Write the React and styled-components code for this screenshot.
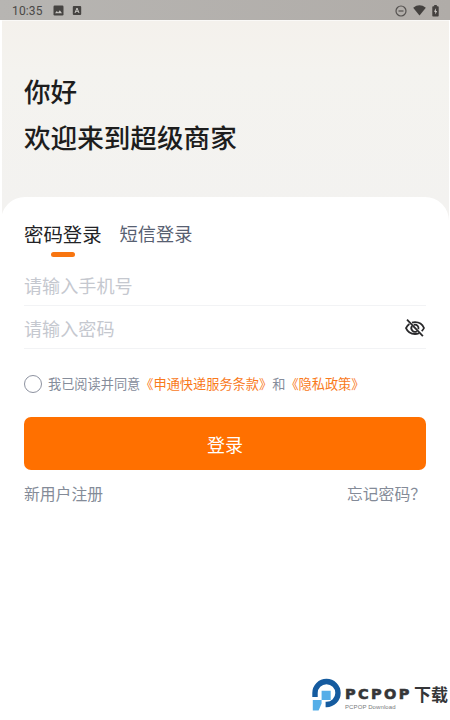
import React from "react";
import styled, { createGlobalStyle } from "styled-components";

const GlobalStyle = createGlobalStyle`
  *, *::before, *::after { box-sizing: border-box; }
  body { margin: 0; background: #fff; }
  button, input { font: inherit; border: 0; padding: 0; margin: 0; background: none; }
`;

const Screen = styled.main`
  width: 450px;
  height: 720px;
  overflow: hidden;
  display: flex;
  flex-direction: column;
  background: #fff;
  font-family: "Noto Sans CJK SC", "Noto Sans", sans-serif;
`;

const StatusBar = styled.header`
  height: 20px;
  flex: none;
  display: flex;
  align-items: center;
  justify-content: space-between;
  padding: 1px 11px 0 12px;
  background: linear-gradient(90deg, #b7b5b2, #b0aca8);
  color: #4a4846;
`;

const StatusGroup = styled.div`
  display: flex;
  align-items: center;
  gap: ${({ $gap }) => $gap}px;
`;

const Clock = styled.time`
  font: 400 12px/18px Roboto, sans-serif;
  letter-spacing: 0.15px;
  width: 32px;
  margin-right: 1px;
`;

const Hero = styled.section`
  height: 187px;
  flex: none;
  margin: 0 1px 0 2px;
  padding: 47px 22px 0;
  border-top: 1px solid #faf9f7;
  background: linear-gradient(180deg, #f4f1ec 0, #f4f3ef 50px, #f3f2f0 100%);
`;

const Greeting = styled.h1`
  margin: 0;
  font-size: 26.6px;
  line-height: 45.5px;
  font-weight: 500;
  color: #1d1d1d;
`;

const GreetingLine = styled.span`
  display: block;
`;

const HeroFoot = styled.div`
  height: 36px;
  flex: none;
  margin: -10px 1px -36px 2px;
  background: #f3f2f0;
`;

const Panel = styled.section`
  flex: 1;
  display: flex;
  flex-direction: column;
  position: relative;
  margin: 0 1px 0 1px;
  padding: 19px 23px 0;
  border-radius: 24px 24px 0 0;
  background: #fff;
`;

const Tabs = styled.nav`
  display: flex;
  align-items: flex-start;
  gap: 18px;
  height: 48px;
`;

const Tab = styled.button`
  display: flex;
  flex-direction: column;
  align-items: center;
  font-size: ${({ $active }) => ($active ? 19.4 : 18.2)}px;
  line-height: ${({ $active }) => ($active ? 36 : 34)}px;
  color: ${({ $active }) => ($active ? "#222326" : "#576071")};
`;

const TabMark = styled.span`
  width: 24px;
  height: 5px;
  border-radius: 3px;
  background: #f87510;
`;

const Field = styled.label`
  display: flex;
  align-items: center;
  justify-content: space-between;
  height: ${({ $height }) => $height}px;
  padding-top: ${({ $drop }) => $drop || 0}px;
  border-bottom: 1px solid #f2f3f5;
`;

const Input = styled.input`
  flex: 1;
  min-width: 0;
  height: 36px;
  font-size: 18.1px;
  outline: none;
  &::placeholder { color: #c5c8cf; opacity: 1; }
`;

const Agreement = styled.div`
  display: flex;
  align-items: center;
  height: 20px;
  margin-top: 25px;
  font-size: 13.2px;
  line-height: 20px;
  color: #868d9b;
  white-space: nowrap;
`;

const Radio = styled.span`
  width: 18px;
  height: 18px;
  margin-right: 6px;
  flex: none;
  border: 1px solid #8d92a0;
  border-radius: 50%;
`;

const Policy = styled.span`
  color: #f97a1c;
`;

const Submit = styled.button`
  height: 53px;
  margin-top: 23px;
  flex: none;
  border-radius: 7px;
  background: #ff7000;
  color: #fff;
  font-size: 18px;
`;

const Links = styled.div`
  display: flex;
  justify-content: space-between;
  margin-top: 12px;
  font-size: 15.8px;
  line-height: 24px;
  color: #848b98;
`;

const Brand = styled.footer`
  display: flex;
  align-items: center;
  height: 36px;
  margin: auto -22px 7px auto;
`;

const BrandText = styled.div`
  display: flex;
  flex-direction: column;
  margin: 4px 0 0 4px;
`;

const BrandName = styled.div`
  display: flex;
  align-items: center;
  height: 19px;
  color: #353638;
`;

const Wordmark = styled.span`
  width: 69px;
  padding-top: 3px;
  font: 700 14.5px/19px "DejaVu Sans", sans-serif;
  letter-spacing: 2.4px;
  -webkit-text-stroke: 0.6px #353638;
`;

const BrandSuffix = styled.span`
  font-size: 17px;
  line-height: 19px;
  font-weight: 700;
`;

const BrandCaption = styled.span`
  font: 6px/8px "Liberation Sans", sans-serif;
  letter-spacing: 0.1px;
  color: #77797c;
`;

const PictureIcon = () => (
  <svg width="11" height="11" viewBox="0 0 11 11">
    <rect x=".5" y=".5" width="10" height="10" rx="1.2" fill="#464442" />
    <path d="M2 8.3 3.8 6l1.3 1.4L6.8 5.2 9 8.3z" fill="#c9c7c4" />
  </svg>
);

const InputModeIcon = () => (
  <svg width="10" height="11" viewBox="0 0 10 11">
    <rect x=".8" y="1" width="8.4" height="9" rx="1" fill="#464442" />
    <path d="m3 8 2-5 2 5M3.7 6.3h2.6" fill="none" stroke="#c9c7c4" />
  </svg>
);

const DndIcon = () => (
  <svg width="12" height="12" viewBox="0 0 12 12" fill="none" stroke="#555250" strokeWidth="1.2">
    <circle cx="6" cy="6" r="5" />
    <path d="M3.5 6h5" />
  </svg>
);

const WifiIcon = () => (
  <svg width="13" height="11" viewBox="0 0 13 11">
    <path d="M.2 2.7Q6.5-2 12.8 2.7L6.5 10.6z" fill="#44413f" />
  </svg>
);

const BatteryIcon = () => (
  <svg width="7" height="12" viewBox="0 0 7 12">
    <path d="M2.2 0h2.6v1.2h1.1q.8 0 .8.8v8.7q0 .8-.8.8H1.1q-.8 0-.8-.8V2q0-.8.8-.8h1.1z" fill="#44413f" />
    <path d="M4.1 3 2 6.8h1.3v2.8L5.1 6H3.8z" fill="#d3d0cd" />
  </svg>
);

const EyeOffIcon = () => (
  <svg width="21" height="20" viewBox="0 0 21 20" fill="none" stroke="#29292b" strokeWidth="1.8">
    <path d="M7 4.7Q8.4 4.2 10 4.2c4.2 0 7.6 2.6 9 5.8q-.8 1.8-2.3 3.2M14 15.2q-1.8.8-4 .8c-4.2 0-7.6-2.6-9-5.9Q2 7.6 4.4 6" />
    <path d="M8.8 6.8a3.6 3.6 0 0 1 4.6 4.4M11.9 13.2A3.6 3.6 0 0 1 7 8.1" />
    <path d="m2 1.7 15.9 16.4" />
  </svg>
);

const BrandIcon = () => (
  <svg width="29" height="34" viewBox="0 0 29 34">
    <path d="M.3 19V15A14.2 14.2 0 1 1 14.5 29.2H13.6v-5.4h.9a8.8 8.8 0 1 0-8.8-8.8V19z" fill="#155b9f" />
    <path d="M9.6 12.8h9.1v9.2H9.6zM.8 22H9.6v3.4L6.6 32.5H.8z" fill="#55aee8" />
  </svg>
);

export default function App() {
  return (
    <Screen>
      <GlobalStyle />
      <StatusBar>
        <StatusGroup $gap={8}>
          <Clock>10:35</Clock>
          <PictureIcon />
          <InputModeIcon />
        </StatusGroup>
        <StatusGroup $gap={6}>
          <DndIcon />
          <WifiIcon />
          <BatteryIcon />
        </StatusGroup>
      </StatusBar>
      <Hero>
        <Greeting>
          <GreetingLine>你好</GreetingLine>
          <GreetingLine>欢迎来到超级商家</GreetingLine>
        </Greeting>
      </Hero>
      <HeroFoot />
      <Panel>
        <Tabs>
          <Tab $active>
            密码登录
            <TabMark />
          </Tab>
          <Tab>短信登录</Tab>
        </Tabs>
        <Field $height={42}>
          <Input type="tel" placeholder="请输入手机号" />
        </Field>
        <Field $height={43} $drop={2}>
          <Input type="password" placeholder="请输入密码" />
          <EyeOffIcon />
        </Field>
        <Agreement>
          <Radio />
          <span>我已阅读并同意</span>
          <Policy>《申通快递服务条款》</Policy>
          <span>和</span>
          <Policy>《隐私政策》</Policy>
        </Agreement>
        <Submit>登录</Submit>
        <Links>
          <span>新用户注册</span>
          <span>忘记密码？</span>
        </Links>
        <Brand>
          <BrandIcon />
          <BrandText>
            <BrandName>
              <Wordmark>PCPOP</Wordmark>
              <BrandSuffix>下载</BrandSuffix>
            </BrandName>
            <BrandCaption>PCPOP Download</BrandCaption>
          </BrandText>
        </Brand>
      </Panel>
    </Screen>
  );
}
